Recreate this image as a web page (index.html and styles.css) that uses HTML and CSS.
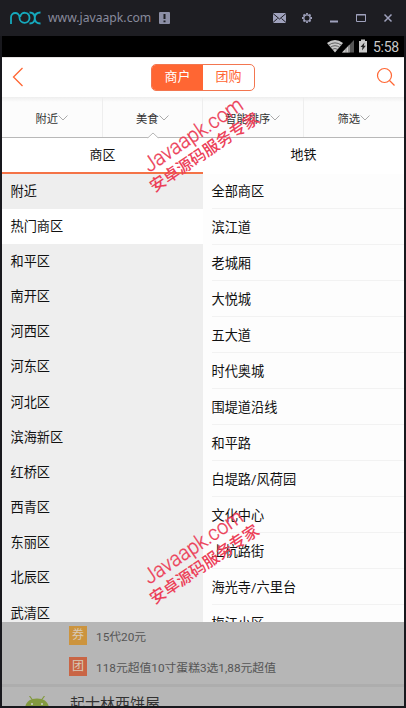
FILE: index.html
```html
<!DOCTYPE html>
<html lang="zh-CN">
<head>
<meta charset="utf-8">
<title>商区</title>
<link rel="stylesheet" href="styles.css">
</head>
<body>
<div class="window">
  <header class="titlebar">
    <svg class="logo" width="31" height="14" viewBox="0 0 31 14"><g fill="none" stroke="#16a9bd" stroke-width="1.800"><path d="M1 13V6.500C1 .5 9.500 .5 9.500 6.500C9.500 13.500 19.500 13.500 19.500 7C19.500 .2 10.800 .2 10.200 6"/><path d="M19.500 1.500C23.500 1.500 24.800 3.500 24.800 7S26 12.500 30.500 12.500M30.500 1.500C26.200 1.500 24.800 3.500 24.800 7S23.500 12.500 19.500 12.500"/></g></svg>
    <span class="site">www.javaapk.com</span>
    <svg class="alert" width="11" height="12" viewBox="0 0 11 12"><rect width="11" height="12" rx="1" fill="#8b8ea5"/><path d="M5.500 2v5M5.500 8.500v1.800" stroke="#1d1d23" stroke-width="2"/></svg>
    <svg class="controls" width="122" height="14" viewBox="0 0 122 14" fill="none" stroke="#9fa1bc">
      <rect x="0" y="2" width="13" height="10" fill="#9fa1bc" stroke="none"/><path d="M0 2.500l6.500 5.500L13 2.500M0 11.500l4.500-4M13 11.500l-4.500-4" stroke="#1d1d23"/>
      <circle cx="34" cy="7" r="3.200" stroke-width="1.300"/><path d="M34 2v1.500M34 10.500V12M29 7h1.500M37.500 7H39M30.500 3.500l1 1M36.500 9.500l1 1M30.500 10.500l1-1M36.500 4.500l1-1" stroke-width="1.800"/>
      <path d="M57 10.500h8" stroke-width="2"/>
      <path d="M83.500 3.500h9v7h-9zM83 4h10" />
      <path d="M111.500 3.500l7 7M118.500 3.500l-7 7" stroke-width="1.500"/>
    </svg>
  </header>
  <main class="screen">
    <div class="status">
      <svg width="41" height="15" viewBox="0 0 41 15"><path d="M0 4Q8 -2 16 4L8 13.500Z" fill="#c9c9c9"/><path d="M1.500 6.200Q8 1.500 14.500 6.200M3.300 8.400Q8 5 12.700 8.400M5 10.500Q8 8.500 11 10.500" fill="none" stroke="#444" stroke-width=".8"/><path d="M15 13.500L27 1v12.500z" fill="#555"/><path d="M15 13.500L22.500 5.700v7.800z" fill="#c9c9c9"/><path d="M19 9v5M21.500 7v7" stroke="#555" stroke-width=".5"/><path d="M32 2h2V.5h4V2h2v11.500h-8z" fill="#c9c9c9"/><path d="M37.500 3.500L33.500 8h2L35 11.500 38.800 6.800h-2z" fill="#222"/></svg>
      <span class="clock">5:58</span>
    </div>
    <div class="header">
      <svg class="back" width="12" height="20" viewBox="0 0 12 20"><path d="M10.500 1L1.500 10l9 9" fill="none" stroke="#ff6633" stroke-width="1.300"/></svg>
      <div class="switch"><span class="on">商户</span><span>团购</span></div>
      <svg class="search" width="20" height="20" viewBox="0 0 20 20"><g fill="none" stroke="#ff6633" stroke-width="1.200"><circle cx="8.500" cy="8.500" r="7"/><path d="M13.500 13.500l5 5"/></g></svg>
    </div>
    <div class="filters">
      <div>附近<svg class="chev" width="10" height="6"><path d="M.5 .5l4.500 4.500L9.500 .5"/></svg></div>
      <div>美食<svg class="chev" width="10" height="6"><path d="M.5 .5l4.500 4.500L9.500 .5"/></svg><svg class="notch" width="12" height="7" viewBox="0 0 12 7"><path d="M0 5.500h1L6 1l5 4.500h1V7H0z" fill="#fff"/><path d="M0 5.700h1L6 1l5 4.700h1" fill="none" stroke="#b8b8b8"/></svg></div>
      <div>智能排序<svg class="chev" width="10" height="6"><path d="M.5 .5l4.500 4.500L9.500 .5"/></svg></div>
      <div>筛选<svg class="chev" width="10" height="6"><path d="M.5 .5l4.500 4.500L9.500 .5"/></svg></div>
    </div>
    <div class="tabs"><div class="active">商区</div><div>地铁</div></div>
    <div class="lists">
      <ul class="districts"><li>附近</li><li class="selected">热门商区</li><li>和平区</li><li>南开区</li><li>河西区</li><li>河东区</li><li>河北区</li><li>滨海新区</li><li>红桥区</li><li>西青区</li><li>东丽区</li><li>北辰区</li><li>武清区</li></ul>
      <ul class="areas"><li>全部商区</li><li>滨江道</li><li>老城厢</li><li>大悦城</li><li>五大道</li><li>时代奥城</li><li>围堤道沿线</li><li>和平路</li><li>白堤路/风荷园</li><li>文化中心</li><li>上杭路街</li><li>海光寺/六里台</li><li>梅江小区</li></ul>
    </div>
    <div class="shaded">
      <div class="deal"><b class="coupon">券</b>15代20元</div>
      <div class="deal second"><b class="group">团</b>118元超值10寸蛋糕3选1,88元超值</div>
      <div class="shop">
        <svg width="26" height="12" viewBox="0 0 26 12"><path d="M1 13C1 7 5 2.500 13 2.500S25 7 25 13z" fill="#839a3f"/><path d="M5.500 0l3 4M20.500 0l-3 4" stroke="#839a3f" stroke-width="1.200"/><circle cx="8" cy="8" r="1" fill="#ccc"/><circle cx="18" cy="8" r="1" fill="#ccc"/></svg>
        <span>起士林西饼屋</span>
      </div>
    </div>
  </main>
  <svg class="mark mark-top" width="130" height="110" viewBox="0 0 130 110"><g transform="rotate(-34 60 55)"><text class="latin" x="3" y="56" textLength="115" lengthAdjust="spacingAndGlyphs">Javaapk.com</text><text class="han" x="-4" y="75.500" textLength="128" lengthAdjust="spacingAndGlyphs">安卓源码服务专家</text></g></svg>
  <svg class="mark mark-low" width="130" height="110" viewBox="0 0 130 110"><g transform="rotate(-34 60 55)"><text class="latin" x="3" y="56" textLength="115" lengthAdjust="spacingAndGlyphs">Javaapk.com</text><text class="han" x="-4" y="75.500" textLength="128" lengthAdjust="spacingAndGlyphs">安卓源码服务专家</text></g></svg>
</div>
</body>
</html>
```
FILE: styles.css
```css
* { box-sizing: border-box; }
body { margin: 0; overflow: hidden; font-family: Roboto, "Noto Sans CJK SC", sans-serif; }
ul { margin: 0; padding: 0; list-style: none; }
svg { display: block; flex: none; }
.window { position: relative; width: 406px; height: 708px; padding: 0 2px 2px; background: #18181d; overflow: hidden; }
.titlebar { display: flex; align-items: center; height: 36px; margin: 0 -2px; padding: 0 11px 0 10px; background: #1d1d22; }
.site { width: 104px; margin-left: 7px; color: #888a9c; font: 12.2px/20px "Noto Sans", sans-serif; white-space: nowrap; }
.alert { margin-left: 7px; }
.controls { margin-left: auto; }
.screen { display: flex; flex-direction: column; width: 402px; height: 670px; overflow: hidden; background: #fff; }
.status { display: flex; flex: none; align-items: center; justify-content: flex-end; height: 21px; padding-right: 5px; background: #000; }
.clock { width: 26px; margin-left: 5px; color: #c9c9c9; font-size: 14px; line-height: 18px; white-space: nowrap; letter-spacing: -.3px; }
.header { display: flex; flex: none; align-items: center; justify-content: space-between; height: 40px; padding: 0 8px 1px 10px; border-top: 1px solid #e5e2e2; }
.switch { display: flex; width: 104px; height: 27px; margin-left: 6px; border: 1px solid #f37650; border-radius: 5px; color: #ff6633; font-size: 13px; line-height: 24px; text-align: center; overflow: hidden; }
.switch span { flex: 1; }
.switch .on { background: #ff6633; color: #fff; }
.filters { display: grid; flex: none; grid-template-columns: repeat(4, 1fr); height: 41px; border-bottom: 1px solid #b8b8b8; background: linear-gradient(#eee, #fcfcfc 5px, #fcfcfc); color: #333; font-size: 11.3px; }
.filters div { position: relative; display: flex; align-items: center; justify-content: center; border-right: 1px solid #eee; padding-top: 1px; }
.filters div:last-child { border-right: 0; }
.chev path { fill: none; stroke: #aaa; }
.notch { position: absolute; left: 44px; bottom: -2px; }
.tabs { display: grid; flex: none; grid-template-columns: 1fr 1fr; height: 36px; color: #111; font-size: 13px; line-height: 34px; text-align: center; }
.tabs .active { border-bottom: 2px solid #f47347; }
.lists { display: grid; flex: none; grid-template-columns: 201px 201px; height: 448px; overflow: hidden; color: #111; font-size: 13.2px; }
.districts { background: #eee; }
.districts li { height: 35.2px; padding-left: 8.5px; line-height: 36px; }
.districts li:first-child { height: 34.6px; line-height: 35px; }
.districts .selected { background: #fff; }
.areas { padding-left: 8.5px; background: #fdfdfd; }
.areas li { height: 36px; border-bottom: 1px solid #f2f2f2; line-height: 37px; }
.areas li:first-child { height: 35px; line-height: 35px; }
.shaded { flex: 1; overflow: hidden; background: #b6b6b6; color: #555; font-size: 11.8px; }
.deal { display: flex; align-items: center; height: 27px; padding-left: 67px; }
.second { height: 35px; padding-bottom: 1px; }
.deal b { width: 18px; height: 19px; margin-right: 9px; color: #d8c9b7; font-size: 12px; font-weight: 400; line-height: 19px; text-align: center; }
.coupon { background: #cc943e; }
.group { background: #c96545; }
.shop { display: flex; height: 40px; padding-left: 22px; border-top: 3px solid #adadad; color: #333; font-size: 15px; line-height: 35px; }
.shop svg { margin-top: 9px; }
.shop span { margin-left: 20px; }
.mark { position: absolute; left: 136px; pointer-events: none; overflow: visible; }
.mark-top { top: 85px; }
.mark-low { top: 497px; }
.latin { fill: #ec4058; stroke: #ec4058; stroke-width: .3px; font: 300 21px Roboto, sans-serif; }
.han { fill: #ec4058; font: 500 16px "Noto Sans CJK SC", sans-serif; }
```
